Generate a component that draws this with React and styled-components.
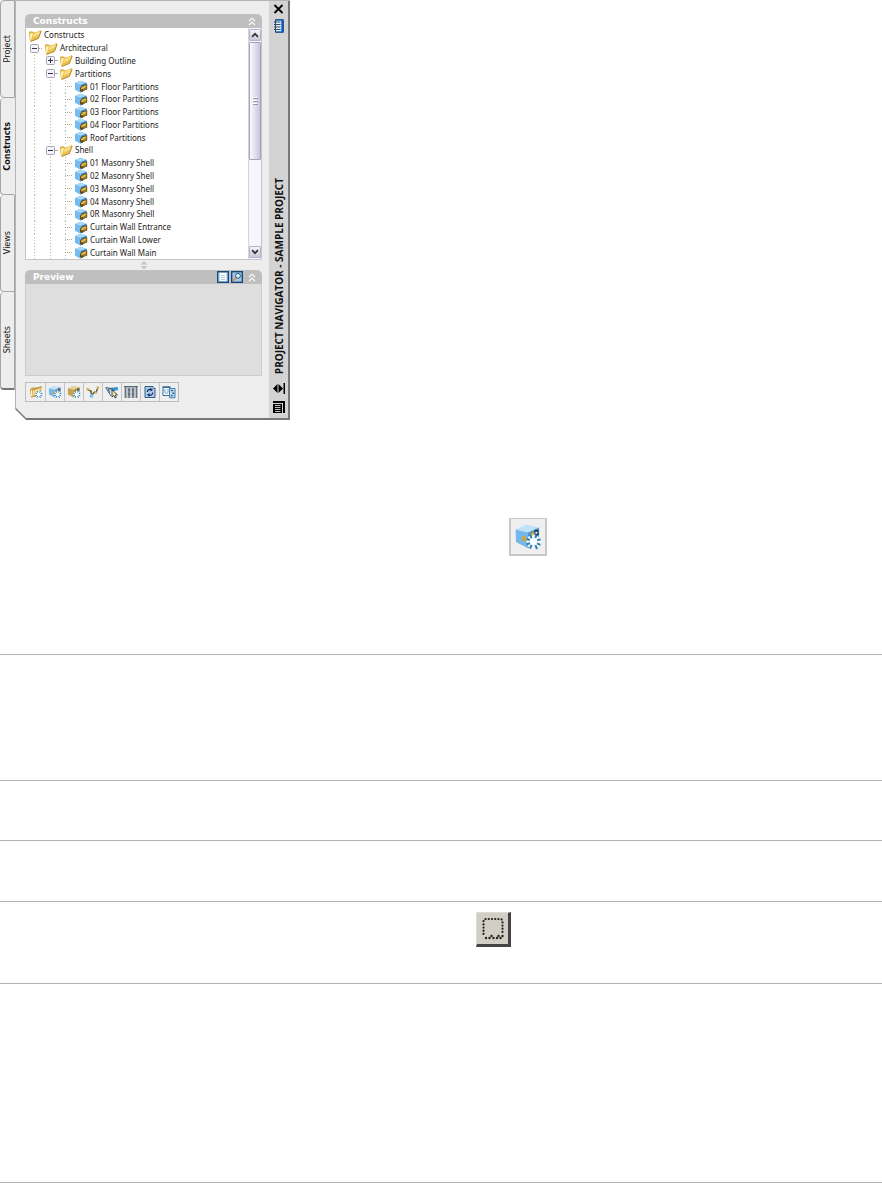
import React, { useState } from 'react';
import styled, { createGlobalStyle } from 'styled-components';

const GlobalStyle = createGlobalStyle`
  * {
    box-sizing: border-box;
  }
  body {
    margin: 0;
    background: #fff;
    color: #222;
    font-family: "Noto Sans", "DejaVu Sans", sans-serif;
    font-size: 8px;
  }
  button {
    margin: 0;
    padding: 0;
    border: 0;
    background: none;
    color: inherit;
    font: inherit;
  }
  svg {
    display: block;
    flex: none;
  }
`;

const Section = styled.section`
  min-height: ${p => p.$height}px;
  padding-top: ${p => p.$top || 0}px;
  padding-left: ${p => p.$left || 0}px;
  border-bottom: 1px solid #b4b4b4;
`;

const Figure = styled.div`
  padding: 98px 0 0 509px;
`;

const Palette = styled.div`
  display: flex;
  width: 290px;
  height: 420px;
`;

const Tabs = styled.div`
  display: flex;
  flex-direction: column;
  width: 15px;
  height: 390px;
`;

const Tab = styled.button`
  flex: 1;
  display: flex;
  align-items: center;
  justify-content: center;
  border: 1px solid #a6a6a6;
  border-top-width: ${p => (p.$first ? 1 : 0)}px;
  border-right-color: ${p => (p.$active ? '#ededed' : '#a6a6a6')};
  border-radius: 4px 0 0 4px;
  background: #ededed;
  color: #111;
  font-family: "DejaVu Sans", sans-serif;
  font-weight: ${p => (p.$active ? 700 : 400)};
  &:last-child {
    border-bottom: 2px solid #777;
  }
`;

const Vertical = styled.span`
  writing-mode: vertical-rl;
  transform: rotate(180deg);
  white-space: nowrap;
  line-height: 12px;
`;

const Frame = styled.div`
  flex: 1;
  display: flex;
  padding: 0 2px 2px 0;
  border: solid #b4b4b4;
  border-width: 1px 0 0 1px;
  background: #777;
  clip-path: polygon(0 0, 100% 0, 100% 100%, 11px 100%, 0 409px);
`;

const Main = styled.div`
  flex: 1;
  display: flex;
  flex-direction: column;
  padding: 13px 7px 0 9px;
  background: #ededed;
  clip-path: polygon(0 0, 100% 0, 100% 100%, 10px 100%, 0 407px);
`;

const PanelHeader = styled.div`
  display: flex;
  align-items: center;
  gap: 2px;
  height: 14px;
  padding: 0 6px 0 8px;
  background: #bfbfbf;
  border-radius: 5px 5px 0 0;
  color: #fff;
`;

const PanelTitle = styled.h2`
  flex: 1;
  margin: 0;
  font: 700 9px/14px "DejaVu Sans", sans-serif;
`;

const HeaderTools = styled.div`
  display: flex;
  gap: 2px;
  padding-right: 3px;
`;

const TreeBox = styled.div`
  display: flex;
  height: 232px;
  border: 1px solid #c4c4c4;
  border-top: 0;
  background: #fff;
`;

const Tree = styled.ul`
  flex: 1;
  display: flex;
  flex-direction: column;
  margin: 0;
  padding: 1px 0 0 2px;
  list-style: none;
`;

const Row = styled.li`
  flex: 1;
  display: flex;
  align-items: center;
  min-height: 0;
  white-space: nowrap;
`;

const Indent = styled.span`
  align-self: stretch;
  display: flex;
  align-items: center;
  width: ${p => p.$width}px;
  padding-left: ${p => (p.$toggle ? 2 : 6)}px;
  background: ${p =>
    p.$toggle
      ? 'none'
      : 'repeating-linear-gradient(#b9b9a8 0 1px, transparent 1px 3px) 6px 0 / 1px 100% no-repeat'};
`;

const Dash = styled.span`
  flex: 1;
  margin-right: 2px;
  border-top: 1px dotted #a9a998;
`;

const Toggle = styled.button`
  display: flex;
  flex: none;
  width: 9px;
  height: 9px;
`;

const Label = styled.span`
  padding-left: 2px;
  line-height: 12px;
`;

const Scroll = styled.div`
  display: flex;
  flex-direction: column;
  width: 13px;
  padding: 1px 0;
  border-left: 1px solid #d4d4dc;
  background: #f6f6fc;
`;

const ScrollButton = styled.button`
  display: flex;
  align-items: center;
  justify-content: center;
  height: 12px;
  border: 1px solid #b4b4c8;
  border-radius: 1px;
  background: linear-gradient(#f4f4fa, #c8c8dc);
`;

const Thumb = styled.div`
  display: flex;
  align-items: center;
  justify-content: center;
  height: 118px;
  margin-top: 1px;
  border: 1px solid #a4a4b8;
  border-radius: 1px;
  background: linear-gradient(90deg, #fafaff, #c6c6dc);
`;

const Track = styled.div`
  flex: 1;
`;

const Splitter = styled.div`
  display: flex;
  align-items: center;
  justify-content: center;
  height: 10px;
`;

const PreviewArea = styled.div`
  height: 92px;
  border: 1px solid #cdcdcd;
  border-top: 0;
  background: #dedede;
`;

const Toolbar = styled.div`
  display: flex;
  align-self: flex-start;
  margin-top: 6px;
  border: 1px solid #bdbdbd;
`;

const ToolButton = styled.button`
  display: flex;
  align-items: center;
  justify-content: center;
  width: 19px;
  height: 18px;
  background: #efefef;
  & + & {
    border-left: 1px solid #c4c4c4;
  }
`;

const TitleBar = styled.div`
  display: flex;
  flex-direction: column;
  align-items: center;
  width: 19px;
  padding: 3px 0 5px;
  background: #d3d3d3;
  color: #111;
`;

const TitleText = styled.div`
  flex: 1;
  display: flex;
  align-items: flex-end;
  padding-bottom: 9px;
  font: 700 10px/14px "Open Sans", sans-serif;
`;

const TitleButton = styled.button`
  display: flex;
  margin-bottom: ${p => p.$gap || 0}px;
`;

const LargeButton = styled.button`
  display: flex;
  align-items: center;
  justify-content: center;
  width: 38px;
  height: 38px;
  border: 2px solid #c8c8c8;
  border-top-width: 1px;
  background: #efefef;
`;

const PickButton = styled.button`
  display: flex;
  align-items: center;
  justify-content: center;
  width: 35px;
  height: 35px;
  border: 1px solid #dedbd4;
  border-right: 3px solid #444;
  border-bottom: 3px solid #444;
  background: #d2cec6;
`;

const FolderIcon = () => (
  <svg width="14" height="13" viewBox="0 0 14 13">
    <path d="M.8 3.5 L2 2.2 L4.5 2.4 L6 3.4 L7.5 3 L5 11.5 L2 12.3 Z" fill="#dcae43" />
    <path d="M1.8 4.2 L6.5 4.2 L3.5 11 L2.3 11.5 Z" fill="#fbf0ae" />
    <path d="M5 4.6 L12.8 .9 L13.2 2 L10.4 9.4 L2.6 12.6 Z" fill="#eebf4d" />
    <path d="M5.8 5 L12.2 2 L11 5.4 L5 8.6 Z" fill="#f9e08c" />
    <path d="M13.2 2 L10.4 9.4 L2.6 12.6" fill="none" stroke="#a8812c" strokeWidth=".9" />
  </svg>
);

const CubeIcon = () => (
  <svg width="14" height="13" viewBox="0 0 14 13">
    <path d="M1 3 L6.5 .7 L12.5 2.8 L12.5 9 L6.5 12.5 L1 9.5 Z" fill="#62b1ea" />
    <path d="M1 3 L6.5 .7 L12.5 2.8 L7 5 Z" fill="#a9dafa" />
    <path d="M1 3 L7 5 L6.5 12.5 L1 9.5 Z" fill="#74bcef" />
    <path d="M7 5 L12.5 2.8 L12.5 9 L6.5 12.5 Z" fill="#3b83c0" />
    <path d="M6 7.8 L8.5 5.2 L13.2 4.2 L13.2 9.4 L10.5 10.5 L8 12 L6 10.8 Z" fill="#5e4813" />
    <path d="M7 8 L9 6 L12.4 5.2 L12.4 7.2 L9.5 9 L7.2 9.6 Z" fill="#ddb548" />
    <path d="M9.2 10 L12.4 7.8 L12.4 9 L9.2 10.8 Z" fill="#c29735" />
  </svg>
);

const ToggleIcon = ({ open }) => (
  <svg width="9" height="9" viewBox="0 0 9 9">
    <rect x=".5" y=".5" width="8" height="8" rx="1" fill="#f2f2f8" stroke="#a4a4b6" />
    <path d={open ? 'M2 4.500h5' : 'M2 4.500h5M4.500 2v5'} stroke="#33334d" />
  </svg>
);

const ChevronsIcon = () => (
  <svg width="8" height="9" viewBox="0 0 8 9" fill="none" stroke="#fff" strokeWidth="1.1">
    <path d="M1 4 L4 1.2 L7 4 M1 8 L4 5.2 L7 8" />
  </svg>
);

const ArrowIcon = ({ down }) => (
  <svg width="8" height="6" viewBox="0 0 8 6" fill="none" stroke="#333" strokeWidth="1.7">
    <path d={down ? 'M1 1.2 L4 4.2 L7 1.2' : 'M1 4.8 L4 1.8 L7 4.8'} />
  </svg>
);

const GripIcon = () => (
  <svg width="6" height="8" viewBox="0 0 6 8">
    <path d="M0 .5h5M0 3.5h5M0 6.5h5" stroke="#fff" />
    <path d="M1 1.5h5M1 4.5h5M1 7.5h5" stroke="#8d9aaa" />
  </svg>
);

const SplitIcon = () => (
  <svg width="8" height="9" viewBox="0 0 8 9" fill="#c6c6c6">
    <path d="M4 0 L7.5 3.5 H.5 Z M.5 5 H7.5 L4 8.5 Z" />
  </svg>
);

const PageIcon = () => (
  <svg width="12" height="12" viewBox="0 0 12 12">
    <rect x=".7" y=".7" width="10.6" height="10.6" fill="#b9dcf5" stroke="#174a7c" strokeWidth="1.4" />
    <rect x="3" y="2" width="6" height="8" fill="#fff" />
    <path d="M4 4.5h4M4 6.5h4M4 8.5h4" stroke="#8fb2cc" strokeWidth=".7" />
  </svg>
);

const FindIcon = () => (
  <svg width="12" height="12" viewBox="0 0 12 12">
    <rect x=".7" y=".7" width="10.6" height="10.6" fill="#a5c8e4" stroke="#174a7c" strokeWidth="1.4" />
    <circle cx="7" cy="4.8" r="2.4" fill="#e8f5fd" stroke="#27517a" />
    <path d="M5 6.8 L2 10" stroke="#c48d50" strokeWidth="1.6" />
  </svg>
);

const Spark = () => (
  <g>
    <circle cx="9.7" cy="9.3" r="3.2" fill="#e2f6ff" />
    <path d="M9.7 5.8v7M6.2 9.300h7M7.200 6.800l5 5M12.200 6.800l-5 5" stroke="#fff" strokeWidth=".9" />
    <path
      d="M8.200 6l.5 1.600M11.100 6.200l-.4 1.300M6.400 8l1.500 .5M13.300 8.200l-1.700 .4M6.300 10.600l1.700-.5M8 12.800l.8-1.800M11.500 13l-.8-1.900M13.200 10.900l-1.700-.7"
      stroke="#2f7fb5"
      strokeWidth="1"
    />
  </g>
);

const NewBoxIcon = ({ size = 14, top = '#c0e3f9', left = '#72b8ea', right = '#4b98d2' }) => (
  <svg width={size} height={size} viewBox="0 0 14 14">
    <path d="M.8 3.200 L6 .8 L12.600 2.200 L7 4.800 Z" fill={top} />
    <path d="M.8 3.200 L7 4.800 V12.600 L1 9.500 Z" fill={left} />
    <path d="M7 4.800 L12.600 2.200 L12.400 9 L7 12.600 Z" fill={right} />
    <path d="M4.200 6.400 L6 7 V9.500 L4.200 8.700 Z M8.600 5 l1.400 -.7 v2.400 l-1.400 .7z" fill="#dba12b" />
    <path d="M10 4.600 l.6 -1.400 1.500 .3 .4 2.300 -1.300 .6z" fill="#25384a" />
    <path d="M10.700 4.400h1v1h-1z" fill="#e8f4fb" />
    <Spark />
  </svg>
);

const NewFolderIcon = () => (
  <svg width="14" height="14" viewBox="0 0 14 14">
    <path d="M.8 4.500 L3 2.500 L8 2.500 L12.800 1 L11.500 11 L2 12.500 Z" fill="#cfa347" />
    <path d="M4 4.800 L12.200 2 L10.500 8 L3 11 Z" fill="#f2d58a" />
    <path d="M2.500 5 L2.500 11" stroke="#fff3cf" />
    <path d="M4 4.800 L12.200 2" stroke="#94702a" strokeWidth=".7" />
    <Spark />
  </svg>
);

const NodesIcon = () => (
  <svg width="14" height="14" viewBox="0 0 14 14">
    <path d="M2 4.500 L5 6.500 L5.500 10.500 L8.500 7 L10 7.500 L11.800 3" fill="none" stroke="#3f4142" strokeWidth="1.2" />
    <path d="M.5 3h2.600v2.600H.5zM8.400 6.400h2.400v2.400H8.400zM10.600 1.400H13.200V4h-2.600z" fill="#d6b34b" />
    <circle cx="5.500" cy="11" r="1.900" fill="#81c1ef" />
    <path d="M4 5.500h2v2H4z" fill="#7b6a2e" />
  </svg>
);

const PickIcon = () => (
  <svg width="14" height="14" viewBox="0 0 14 14">
    <path d="M3 3 L13 2 V5 L9 6 Z" fill="#3c9ad4" />
    <path d="M.5 2.500 L8 4 M1 3 L6 11 M3 5 L10 5 M3 3.500 L5 8" stroke="#44637b" fill="none" />
    <path d="M4 5 L7 5.500 L6 8 Z" fill="#d7e5ed" />
    <path d="M7 5 V12 L8.800 10.500 L10 13 L11.400 12.300 L10.300 10 L12.500 9.800 Z" fill="#f6e29a" stroke="#16344f" strokeWidth=".8" />
  </svg>
);

const ColumnsIcon = () => (
  <svg width="14" height="14" viewBox="0 0 14 14">
    <path d="M.5 1h13v12H.5z" fill="#aab2bd" />
    <path d="M0 1.500h14" stroke="#56677a" />
    <path d="M1.500 2v11M5 3v10M9 3v10M12.500 2v11" stroke="#66717f" strokeWidth="1.400" />
    <path d="M3 3v10M7 3v10M11 3v10" stroke="#dfe4ea" strokeWidth=".8" />
    <path d="M4.400 5h1.200M8.400 5h1.200M4.400 9h1.200M8.400 9h1.200" stroke="#2f3842" />
  </svg>
);

const RefreshIcon = () => (
  <svg width="14" height="14" viewBox="0 0 14 14">
    <path d="M2 1.500h8l2 2v9H2z" fill="#afcde3" stroke="#315e8c" />
    <path d="M10 1.500v2h2" fill="#fff" stroke="#315e8c" strokeWidth=".7" />
    <path d="M4.300 7 A3 3 0 0 1 8.500 4.500 M9.800 7.500 A3 3 0 0 1 5.300 10" fill="none" stroke="#172f73" strokeWidth="1.300" />
    <path d="M7.500 2.800 L10 5 L7.300 6.500 Z M6.500 8 L4 9.800 L6.700 11.700 Z" fill="#172f73" />
  </svg>
);

const ContentIcon = () => (
  <svg width="14" height="14" viewBox="0 0 14 14">
    <path d="M1 2.500h7v8H1z" fill="#f8fcff" stroke="#2c6da0" />
    <path d="M.5 2h8" stroke="#2c6da0" strokeWidth="1.400" />
    <path d="M3 4v3.500l1.500 1L6 7.500V4" fill="none" stroke="#5f93b8" strokeWidth=".9" />
    <path d="M7.500 3.500h5.500v9.300H7.500z" fill="#bad9ec" stroke="#4380ad" />
    <path d="M9 5.500h1.600M10.500 7l1.100 1-1.100 1.200M9 10.800h1.600" fill="none" stroke="#142e5b" />
  </svg>
);

const CloseIcon = () => (
  <svg width="11" height="10" viewBox="0 0 11 10">
    <path d="M1.500 1 L9.500 9 M9.500 1 L1.500 9" stroke="#000" strokeWidth="1.8" />
  </svg>
);

const NotebookIcon = () => (
  <svg width="10" height="14" viewBox="0 0 10 14">
    <path d="M1.5 .7h7.800v12.600H1.500z" fill="#4b96e2" stroke="#164580" />
    <path d="M2 2h5v10H2z" fill="#e3effa" />
    <path d="M0 3h6.500M0 5.500h6.500M0 8h6.500M0 10.500h6.500" stroke="#354a60" />
    <path d="M8.500 1v12" stroke="#0a55bd" strokeWidth="1.4" />
  </svg>
);

const AutoHideIcon = () => (
  <svg width="12" height="11" viewBox="0 0 12 11">
    <path d="M0 5.500 L4.500 1 V10 Z M5.500 1 L10 5.500 L5.500 10 Z M10.500 0 h1.500 v11 h-1.500z" fill="#000" />
  </svg>
);

const PropertiesIcon = () => (
  <svg width="12" height="12" viewBox="0 0 12 12">
    <path d="M0 0h12v2H0zM10 0h2v12h-2zM0 3h9v9H0z" fill="#000" />
    <path d="M2 4.500h5.500M2 6.500h5.500M2 8.500h5.500M2 10.500h5.500" stroke="#d3d3d3" strokeWidth=".9" />
  </svg>
);

const SelectionIcon = () => (
  <svg width="24" height="24" viewBox="0 0 24 24" fill="#222">
    <path
      d="M2.500 17 V4.500 Q2.500 2 5 2 H19 Q21.500 2 21.500 4.500 V18"
      fill="none"
      stroke="#222"
      strokeWidth="2.200"
      strokeLinecap="round"
      strokeDasharray=".1 3.100"
    />
    <g>
      <circle cx="5" cy="21" r="1.200" />
      <circle cx="8.500" cy="21" r="1.200" />
      <circle cx="10.500" cy="19" r="1.200" />
      <circle cx="12.500" cy="21" r="1.200" />
      <circle cx="16" cy="21" r="1.200" />
      <circle cx="17.500" cy="19" r="1.200" />
      <circle cx="19.500" cy="21" r="1.200" />
      <circle cx="21.500" cy="19" r="1.200" />
    </g>
  </svg>
);

const tabs = ['Project', 'Constructs', 'Views', 'Sheets'];

// level is the depth in the tree, open is only set for folders with a toggle
const rows = [
  { name: 'Constructs', level: 0, folder: true },
  { name: 'Architectural', level: 1, folder: true, open: true },
  { name: 'Building Outline', level: 2, folder: true, open: false },
  { name: 'Partitions', level: 2, folder: true, open: true },
  { name: '01 Floor Partitions', level: 3 },
  { name: '02 Floor Partitions', level: 3 },
  { name: '03 Floor Partitions', level: 3 },
  { name: '04 Floor Partitions', level: 3 },
  { name: 'Roof Partitions', level: 3 },
  { name: 'Shell', level: 2, folder: true, open: true },
  { name: '01 Masonry Shell', level: 3 },
  { name: '02 Masonry Shell', level: 3 },
  { name: '03 Masonry Shell', level: 3 },
  { name: '04 Masonry Shell', level: 3 },
  { name: '0R Masonry Shell', level: 3 },
  { name: 'Curtain Wall Entrance', level: 3 },
  { name: 'Curtain Wall Lower', level: 3 },
  { name: 'Curtain Wall Main', level: 3 },
];

const tools = [
  { label: 'Add Category', Icon: NewFolderIcon },
  { label: 'Add Construct', Icon: NewBoxIcon },
  { label: 'Add Element', Icon: () => <NewBoxIcon top="#e6d190" left="#c4a252" right="#a5853c" /> },
  { label: 'Repath', Icon: NodesIcon },
  { label: 'Show External References', Icon: PickIcon },
  { label: 'Layers', Icon: ColumnsIcon },
  { label: 'Refresh Project', Icon: RefreshIcon },
  { label: 'Content Browser', Icon: ContentIcon },
];

const TreeRow = ({ row }) => {
  const levels = Array.from({ length: row.level }, (_, i) => i);
  return (
    <Row role="treeitem" aria-level={row.level + 1} aria-expanded={row.open}>
      {levels.map(i => {
        const last = i === row.level - 1;
        return (
          <Indent key={i} $width={i === 0 ? 16 : 15} $toggle={last && row.folder}>
            {last && row.folder && (
              <Toggle aria-label={`Toggle ${row.name}`}>
                <ToggleIcon open={row.open} />
              </Toggle>
            )}
            {last && <Dash />}
          </Indent>
        );
      })}
      {row.folder ? <FolderIcon /> : <CubeIcon />}
      <Label>{row.name}</Label>
    </Row>
  );
};

const App = () => {
  const [active, setActive] = useState('Constructs');

  return (
    <>
      <GlobalStyle />
      <Section $height={655}>
        <Palette>
          <Tabs role="tablist">
            {tabs.map((tab, i) => (
              <Tab
                key={tab}
                role="tab"
                aria-selected={tab === active}
                $active={tab === active}
                $first={i === 0}
                onClick={() => setActive(tab)}
              >
                <Vertical>{tab}</Vertical>
              </Tab>
            ))}
          </Tabs>
          <Frame>
            <Main>
              <PanelHeader>
                <PanelTitle>Constructs</PanelTitle>
                <button aria-label="Collapse Constructs"><ChevronsIcon /></button>
              </PanelHeader>
              <TreeBox>
                <Tree role="tree" aria-label="Constructs">
                  {rows.map(row => <TreeRow key={row.name} row={row} />)}
                </Tree>
                <Scroll>
                  <ScrollButton aria-label="Scroll up"><ArrowIcon /></ScrollButton>
                  <Thumb><GripIcon /></Thumb>
                  <Track />
                  <ScrollButton aria-label="Scroll down"><ArrowIcon down /></ScrollButton>
                </Scroll>
              </TreeBox>
              <Splitter><SplitIcon /></Splitter>
              <PanelHeader>
                <PanelTitle>Preview</PanelTitle>
                <HeaderTools>
                  <button aria-label="Detail view"><PageIcon /></button>
                  <button aria-label="Preview view"><FindIcon /></button>
                </HeaderTools>
                <button aria-label="Collapse Preview"><ChevronsIcon /></button>
              </PanelHeader>
              <PreviewArea />
              <Toolbar role="toolbar">
                {tools.map(({ label, Icon }) => (
                  <ToolButton key={label} aria-label={label}>
                    <Icon />
                  </ToolButton>
                ))}
              </Toolbar>
            </Main>
            <TitleBar>
              <TitleButton aria-label="Close" $gap={5}><CloseIcon /></TitleButton>
              <TitleButton aria-label="Project properties"><NotebookIcon /></TitleButton>
              <TitleText>
                <Vertical>PROJECT NAVIGATOR - SAMPLE PROJECT</Vertical>
              </TitleText>
              <TitleButton aria-label="Auto-hide" $gap={7}><AutoHideIcon /></TitleButton>
              <TitleButton aria-label="Properties"><PropertiesIcon /></TitleButton>
            </TitleBar>
          </Frame>
        </Palette>
        <Figure>
          <LargeButton aria-label="Add Construct"><NewBoxIcon size={28} /></LargeButton>
        </Figure>
      </Section>
      <Section $height={126} />
      <Section $height={60} />
      <Section $height={61} />
      <Section $height={82} $top={10} $left={476}>
        <PickButton aria-label="Pick window"><SelectionIcon /></PickButton>
      </Section>
      <Section $height={199} />
    </>
  );
};

export default App;
